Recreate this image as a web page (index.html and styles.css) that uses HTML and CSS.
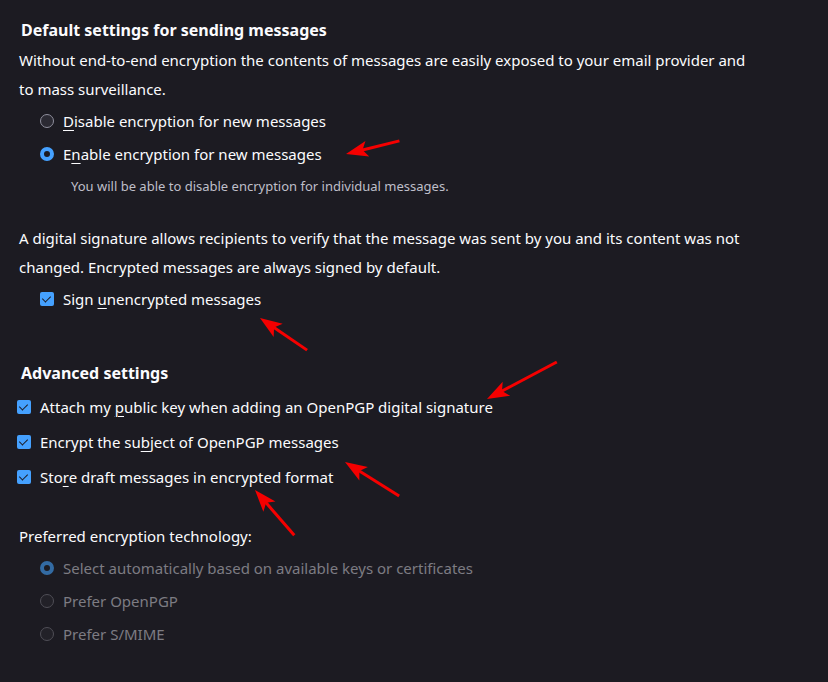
FILE: index.html
```html
<!DOCTYPE html>
<html lang="en">
<head>
<meta charset="UTF-8">
<title>End-To-End Encryption settings</title>
<link rel="stylesheet" href="styles.css">
</head>
<body>
<div class="page">
    <h1 class="title">Default settings for sending messages</h1>
    <p class="desc">Without end-to-end encryption the contents of messages are easily exposed to your email provider and to mass surveillance.</p>
    <div class="options">
        <label class="option"><span class="radio"></span><span><u>D</u>isable encryption for new messages</span></label>
        <label class="option"><span class="radio checked"></span><span>E<u>n</u>able encryption for new messages</span></label>
    </div>
    <p class="note">You will be able to disable encryption for individual messages.</p>

    <p class="desc sig">A digital signature allows recipients to verify that the message was sent by you and its content was not changed. Encrypted messages are always signed by default.</p>
    <div class="options">
        <label class="option"><span class="check"></span><span>Sign <u>u</u>nencrypted messages</span></label>
    </div>

    <h2 class="title advanced">Advanced settings</h2>
    <div class="checks">
        <label class="option tall"><span class="check"></span><span>Attach my <u>p</u>ublic key when adding an OpenPGP digital signature</span></label>
        <label class="option tall"><span class="check"></span><span>Encrypt the su<u>b</u>ject of OpenPGP messages</span></label>
        <label class="option tall"><span class="check"></span><span>Sto<u>r</u>e draft messages in encrypted format</span></label>
    </div>

    <p class="desc pref">Preferred encryption technology:</p>
    <div class="options disabled">
        <label class="option"><span class="radio checked"></span><span>Select automatically based on available keys or certificates</span></label>
        <label class="option"><span class="radio"></span><span>Prefer OpenPGP</span></label>
        <label class="option"><span class="radio"></span><span>Prefer S/MIME</span></label>
    </div>
</div>

<svg class="arrows" width="828" height="682" viewBox="0 0 828 682">
    <g transform="translate(346 154) rotate(166.2)">
        <line x1="-55" y1="0" x2="-16" y2="0"/>
        <polygon points="0,0 -22,-8 -17,0 -22,8"/>
    </g>
    <g transform="translate(260 318) rotate(-145.7)">
        <line x1="-57" y1="0" x2="-16" y2="0"/>
        <polygon points="0,0 -22,-8 -17,0 -22,8"/>
    </g>
    <g transform="translate(487 399) rotate(152.1)">
        <line x1="-79" y1="0" x2="-16" y2="0"/>
        <polygon points="0,0 -22,-8 -17,0 -22,8"/>
    </g>
    <g transform="translate(345 462) rotate(-147.8)">
        <line x1="-64" y1="0" x2="-16" y2="0"/>
        <polygon points="0,0 -22,-8 -17,0 -22,8"/>
    </g>
    <g transform="translate(255 490) rotate(-130.9)">
        <line x1="-60" y1="0" x2="-16" y2="0"/>
        <polygon points="0,0 -22,-8 -17,0 -22,8"/>
    </g>
</svg>
</body>
</html>
```
FILE: styles.css
```css
body {
    margin: 0;
    background-color: #1c1b22;
    color: #fbfbfe;
    font-family: "Noto Sans", "Open Sans", sans-serif;
    font-size: 15px;
    height: 682px;
    overflow: hidden;
}
.page {
    width: 735px;
    padding: 0 0 0 19px;
}
.title {
    font-size: 16px;
    font-weight: bold;
    line-height: 24px;
    margin: 18px 0 0 2px;
}
.advanced {
    margin-top: 46px;
    margin-bottom: 4px;
}
.desc {
    line-height: 29px;
    margin: 4px 0 0;
}
.sig {
    margin-top: 28px;
}
.pref {
    margin-top: 28px;
}
.options {
    padding-left: 21px;
}
.option {
    display: flex;
    align-items: center;
    gap: 9px;
    height: 33px;
}
.option.tall {
    height: 35px;
}
.checks {
    margin-left: -2px;
}
u {
    text-decoration-thickness: 1px;
    text-underline-offset: 3px;
}
.radio {
    width: 12px;
    height: 12px;
    border-radius: 50%;
    border: 1px solid #8f8f9d;
    background-color: #2b2a33;
    flex: none;
}
.radio.checked {
    width: 6px;
    height: 6px;
    border: 4px solid #45a1ff;
    background-color: #1c1b22;
}
.check {
    width: 14px;
    height: 14px;
    border-radius: 2px;
    background-color: #45a1ff;
    flex: none;
    position: relative;
}
.check::after {
    content: "";
    position: absolute;
    left: 4px;
    top: 2px;
    width: 4px;
    height: 7px;
    border: solid #1c1b22;
    border-width: 0 1.5px 1.5px 0;
    transform: rotate(45deg);
}
.note {
    font-size: 13px;
    line-height: 20px;
    color: #bfbfc9;
    margin: 6px 0 0 52px;
}
.disabled {
    color: #7d7c83;
}
.disabled .radio {
    border-color: #4f4e56;
    background-color: #222128;
}
.disabled .radio.checked {
    border-color: #336ba3;
    background-color: #1c1b22;
}
.arrows {
    position: absolute;
    left: 0;
    top: 0;
    pointer-events: none;
}
.arrows line {
    stroke: #f50000;
    stroke-width: 3;
}
.arrows polygon {
    fill: #f50000;
}
```
